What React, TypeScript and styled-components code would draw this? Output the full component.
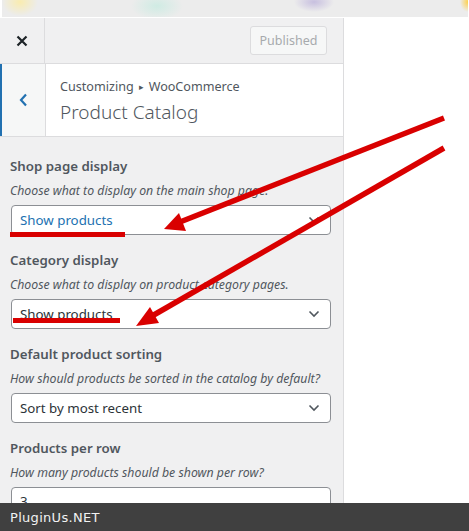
import { FC } from "react";
import styled, { createGlobalStyle } from "styled-components";

const GlobalStyle = createGlobalStyle`
  html, body {
    margin: 0;
    padding: 0;
    background: #fff;
  }
  body {
    font-family: "Noto Sans", "Open Sans", sans-serif;
    color: #2c3338;
  }
`;

const Page = styled.div`
  position: relative;
  width: 469px;
  height: 531px;
  display: grid;
  grid-template-rows: 18px 1fr 28px;
  overflow: hidden;
  background: #fff;
`;

const TopStrip = styled.div`
  margin: 0 1px 1px 2px;
  background:
    radial-gradient(ellipse 18px 14px at 18px 2px, rgba(255, 236, 150, 0.7), transparent),
    radial-gradient(ellipse 26px 14px at 155px 6px, rgba(200, 235, 225, 0.8), transparent),
    radial-gradient(ellipse 20px 10px at 312px 2px, rgba(190, 180, 220, 0.8), transparent),
    radial-gradient(ellipse 8px 10px at 466px 2px, rgba(255, 205, 60, 0.9), transparent),
    #ececec;
`;

const Body = styled.div`
  display: flex;
  overflow: hidden;
`;

const Sidebar = styled.aside`
  width: 343px;
  flex: none;
  background: #f0f0f1;
  border-right: 1px solid #dcdcde;
  display: flex;
  flex-direction: column;
`;

const Header = styled.div`
  flex: none;
  height: 45px;
  display: flex;
  align-items: center;
  border-bottom: 1px solid #dcdcde;
`;

const CloseButton = styled.div`
  width: 45px;
  height: 100%;
  border-right: 1px solid #dcdcde;
  display: flex;
  align-items: center;
  justify-content: center;
  box-sizing: border-box;
`;

const PublishButton = styled.div`
  margin-left: auto;
  margin-right: 16px;
  width: 77px;
  height: 29px;
  box-sizing: border-box;
  border: 1px solid #dcdcde;
  border-radius: 3px;
  background: #f6f7f7;
  color: #a7aaad;
  font-size: 12.5px;
  display: flex;
  align-items: center;
  justify-content: center;
`;

const SectionHead = styled.div`
  flex: none;
  height: 72px;
  display: flex;
  background: #fff;
  border-bottom: 1px solid #dcdcde;
`;

const BackButton = styled.div`
  width: 43px;
  flex: none;
  background: #f6f7f7;
  border-left: 2px solid #2271b1;
  border-right: 1px solid #dcdcde;
  display: flex;
  align-items: center;
  justify-content: center;
`;

const SectionTitle = styled.div`
  padding: 13px 0 0 14px;
  color: #50575e;
`;

const Crumb = styled.div`
  font-size: 12.6px;
  line-height: 20px;
  display: flex;
  align-items: center;
  gap: 5px;
`;

const Arrow = styled.span`
  font-size: 9px;
`;

const Title = styled.div`
  font-size: 19px;
  font-weight: 300;
  line-height: 28px;
  margin-top: 1px;
`;

const Controls = styled.div`
  flex: none;
  padding: 19px 12px 0 10px;
  display: flex;
  flex-direction: column;
  gap: 15px;
`;

const Control = styled.div`
  display: flex;
  flex-direction: column;
`;

const Label = styled.div`
  font-size: 13.3px;
  font-weight: 600;
  line-height: 20px;
  color: #50575e;
`;

const Description = styled.div`
  font-size: 12.3px;
  font-style: italic;
  line-height: 18px;
  margin-top: 6px;
  margin-bottom: 5px;
  color: #50575e;
`;

const Select = styled.div<{ $hover?: boolean }>`
  height: 30px;
  margin-left: 1px;
  box-sizing: border-box;
  border: 1px solid #8c8f94;
  border-radius: 4px;
  background: #fff;
  display: flex;
  align-items: center;
  padding: 0 10px 0 8px;
  font-size: 13.3px;
  color: ${(p) => (p.$hover ? "#2271b1" : "#2c3338")};
`;

const SelectValue = styled.span`
  flex: 1;
`;

const TextInput = styled.div`
  height: 30px;
  margin-left: 1px;
  box-sizing: border-box;
  border: 1px solid #8c8f94;
  border-radius: 4px;
  background: #fff;
  padding: 4px 8px;
  font-size: 13.3px;
`;

const Preview = styled.div`
  flex: 1;
  background: #fff;
`;

const Footer = styled.div`
  background: #404040;
  color: #f2f2f2;
  font-family: "DejaVu Sans", Verdana, sans-serif;
  font-size: 13px;
  letter-spacing: 0.3px;
  display: flex;
  align-items: center;
  padding-left: 10px;
`;

const Annotations = styled.svg`
  position: absolute;
  left: 0;
  top: 0;
  pointer-events: none;
`;

const Chevron: FC = () => (
  <svg width="12" height="8" viewBox="0 0 12 8">
    <path d="M1.5 1.5 L6 6 L10.5 1.5" fill="none" stroke="#50575e" strokeWidth="1.6" />
  </svg>
);

type TSelectControl = {
  label: string;
  description: string;
  value: string;
  hover?: boolean;
};

const SelectControl: FC<TSelectControl> = ({ label, description, value, hover }) => (
  <Control>
    <Label>{label}</Label>
    <Description>{description}</Description>
    <Select $hover={hover}>
      <SelectValue>{value}</SelectValue>
      <Chevron />
    </Select>
  </Control>
);

export default function App() {
  return (
    <>
      <GlobalStyle />
      <Page>
        <TopStrip />
        <Body>
          <Sidebar>
            <Header>
              <CloseButton>
                <svg width="12" height="12" viewBox="0 0 12 12">
                  <path d="M1.5 1.5 L10.5 10.5 M10.5 1.5 L1.5 10.5" stroke="#1d2327" strokeWidth="2.2" />
                </svg>
              </CloseButton>
              <PublishButton>Published</PublishButton>
            </Header>
            <SectionHead>
              <BackButton>
                <svg width="9" height="14" viewBox="0 0 9 14">
                  <path d="M7 1.5 L2 7 L7 12.5" fill="none" stroke="#2271b1" strokeWidth="2.2" />
                </svg>
              </BackButton>
              <SectionTitle>
                <Crumb>
                  Customizing <Arrow>▸</Arrow> WooCommerce
                </Crumb>
                <Title>Product Catalog</Title>
              </SectionTitle>
            </SectionHead>
            <Controls>
              <SelectControl
                label="Shop page display"
                description="Choose what to display on the main shop page."
                value="Show products"
                hover
              />
              <SelectControl
                label="Category display"
                description="Choose what to display on product category pages."
                value="Show products"
              />
              <SelectControl
                label="Default product sorting"
                description="How should products be sorted in the catalog by default?"
                value="Sort by most recent"
              />
              <Control>
                <Label>Products per row</Label>
                <Description>How many products should be shown per row?</Description>
                <TextInput>3</TextInput>
              </Control>
            </Controls>
          </Sidebar>
          <Preview />
        </Body>
        <Footer>PluginUs.NET</Footer>
        <Annotations width="469" height="531" viewBox="0 0 469 531">
          <g fill="#d90000" stroke="#d90000">
            <line x1="444" y1="118" x2="180" y2="222" strokeWidth="5.5" />
            <polygon points="164,229 186,231 179,213" stroke="none" />
            <line x1="444" y1="148" x2="152" y2="316" strokeWidth="5.5" />
            <polygon points="136,326 159,323 150,307" stroke="none" />
            <rect x="10" y="232" width="115" height="5" stroke="none" />
            <rect x="13" y="318" width="107" height="5" stroke="none" />
          </g>
        </Annotations>
      </Page>
    </>
  );
}
